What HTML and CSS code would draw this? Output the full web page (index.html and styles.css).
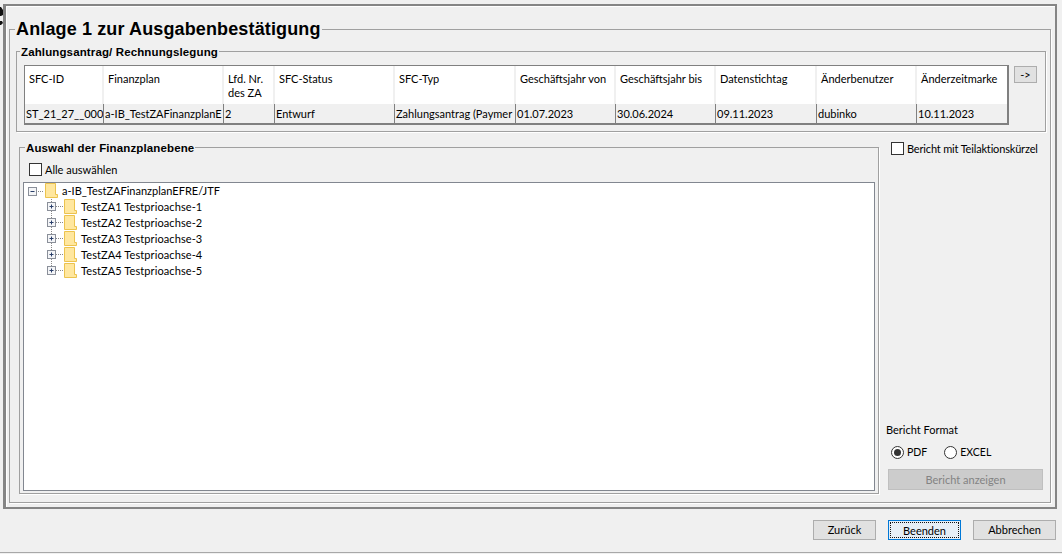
FILE: index.html
```html
<!DOCTYPE html>
<html lang="de">
<head>
<meta charset="utf-8">
<title>Anlage 1 zur Ausgabenbestätigung</title>
<link rel="stylesheet" href="styles.css">
</head>
<body>
<svg class="cursor-bit" width="6" height="20" viewBox="0 0 6 20"><path d="M0 0H1L3 3V8L1 9H0ZM0 14H2L3 16L1 18H0Z" fill="#111"/></svg>
<div class="app">
  <div class="frame">
    <fieldset class="fs main">
      <legend class="title">Anlage 1 zur Ausgabenbestätigung</legend>
      <fieldset class="fs pay">
        <legend class="sub">Zahlungsantrag/ Rechnungslegung</legend>
        <div class="pay-row">
          <table class="grid">
            <colgroup>
              <col class="c79"><col class="c120"><col class="c51"><col class="c120"><col class="c121"><col class="c100"><col class="c100"><col class="c101"><col class="c100"><col class="c90">
            </colgroup>
            <thead>
              <tr>
                <th>SFC-ID</th><th>Finanzplan</th><th>Lfd. Nr.<br>des ZA</th><th>SFC-Status</th><th>SFC-Typ</th><th>Geschäftsjahr von</th><th>Geschäftsjahr bis</th><th>Datenstichtag</th><th>Änderbenutzer</th><th>Änderzeitmarke</th>
              </tr>
            </thead>
            <tbody>
              <tr>
                <td>ST_21_27__000</td><td>a-IB_TestZAFinanzplanE</td><td>2</td><td>Entwurf</td><td>Zahlungsantrag (Paymer</td><td>01.07.2023</td><td>30.06.2024</td><td>09.11.2023</td><td>dubinko</td><td>10.11.2023</td>
              </tr>
            </tbody>
          </table>
          <button class="btn arrow" type="button">-&gt;</button>
        </div>
      </fieldset>
      <div class="middle">
        <fieldset class="fs select">
          <legend class="sub">Auswahl der Finanzplanebene</legend>
          <label class="check all"><span class="box"></span>Alle auswählen</label>
          <div class="tree">
            <div class="node">
              <svg class="tw-root" width="38" height="16" viewBox="0 0 38 16"><rect x="4.5" y="4.5" width="8" height="8" fill="#f4f5f7" stroke="#8a8f99"/><path d="M6.5 8.5h4" stroke="#2a3f6a"/><path d="M14 8.5h6" stroke="#888" stroke-dasharray="1 1"/><path class="folder" d="M21.5.5H31.5V11.5H33.5V14.5H21.5Z"/></svg>
              <span>a-IB_TestZAFinanzplanEFRE/JTF</span>
            </div>
            <div class="node child">
              <svg width="57" height="16" viewBox="0 0 57 16"><path d="M27.5 0V3M27.5 12V16" stroke="#888" stroke-dasharray="1 1"/><rect x="23.5" y="3.5" width="8" height="8" fill="#f4f5f7" stroke="#8a8f99"/><path d="M25.5 7.5h4M27.5 5.5v4" stroke="#2a3f6a"/><path d="M32 7.5h7" stroke="#888" stroke-dasharray="1 1"/><path class="folder" d="M40.5.5H50.5V11.5H52.5V14.5H40.5Z"/></svg>
              <span>TestZA1 Testprioachse-1</span>
            </div>
            <div class="node child">
              <svg width="57" height="16" viewBox="0 0 57 16"><path d="M27.5 0V3M27.5 12V16" stroke="#888" stroke-dasharray="1 1"/><rect x="23.5" y="3.5" width="8" height="8" fill="#f4f5f7" stroke="#8a8f99"/><path d="M25.5 7.5h4M27.5 5.5v4" stroke="#2a3f6a"/><path d="M32 7.5h7" stroke="#888" stroke-dasharray="1 1"/><path class="folder" d="M40.5.5H50.5V11.5H52.5V14.5H40.5Z"/></svg>
              <span>TestZA2 Testprioachse-2</span>
            </div>
            <div class="node child">
              <svg width="57" height="16" viewBox="0 0 57 16"><path d="M27.5 0V3M27.5 12V16" stroke="#888" stroke-dasharray="1 1"/><rect x="23.5" y="3.5" width="8" height="8" fill="#f4f5f7" stroke="#8a8f99"/><path d="M25.5 7.5h4M27.5 5.5v4" stroke="#2a3f6a"/><path d="M32 7.5h7" stroke="#888" stroke-dasharray="1 1"/><path class="folder" d="M40.5.5H50.5V11.5H52.5V14.5H40.5Z"/></svg>
              <span>TestZA3 Testprioachse-3</span>
            </div>
            <div class="node child">
              <svg width="57" height="16" viewBox="0 0 57 16"><path d="M27.5 0V3M27.5 12V16" stroke="#888" stroke-dasharray="1 1"/><rect x="23.5" y="3.5" width="8" height="8" fill="#f4f5f7" stroke="#8a8f99"/><path d="M25.5 7.5h4M27.5 5.5v4" stroke="#2a3f6a"/><path d="M32 7.5h7" stroke="#888" stroke-dasharray="1 1"/><path class="folder" d="M40.5.5H50.5V11.5H52.5V14.5H40.5Z"/></svg>
              <span>TestZA4 Testprioachse-4</span>
            </div>
            <div class="node child">
              <svg width="57" height="16" viewBox="0 0 57 16"><path d="M27.5 0V3" stroke="#888" stroke-dasharray="1 1"/><rect x="23.5" y="3.5" width="8" height="8" fill="#f4f5f7" stroke="#8a8f99"/><path d="M25.5 7.5h4M27.5 5.5v4" stroke="#2a3f6a"/><path d="M32 7.5h7" stroke="#888" stroke-dasharray="1 1"/><path class="folder" d="M40.5.5H50.5V11.5H52.5V14.5H40.5Z"/></svg>
              <span>TestZA5 Testprioachse-5</span>
            </div>
          </div>
        </fieldset>
        <div class="side">
          <label class="check part"><span class="box"></span>Bericht mit Teilaktionskürzel</label>
          <div class="format">
            <div class="format-label">Bericht Format</div>
            <div class="radios">
              <label class="radio"><span class="dot on"></span>PDF</label>
              <label class="radio"><span class="dot"></span>EXCEL</label>
            </div>
            <button class="btn show" type="button">Bericht anzeigen</button>
          </div>
        </div>
      </fieldset>
    </fieldset>
  </div>
  <div class="footer">
    <button class="btn foot back" type="button">Zurück</button>
    <button class="btn foot end" type="button"><span class="focus">Beenden</span></button>
    <button class="btn foot cancel" type="button">Abbrechen</button>
  </div>
</div>
</body>
</html>
```
FILE: styles.css
```css
* { box-sizing: border-box; }
html, body { margin: 0; height: 100%; }
body {
  background: #f0f0f0;
  color: #000;
  font: 11px/14px Lato, "Noto Sans", sans-serif;
  overflow: hidden;
}
.cursor-bit { position: absolute; left: 0; top: 7px; }
.app { width: 1062px; height: 554px; display: flex; flex-direction: column; }
.frame {
  margin: 4px 5px 0 3px;
  height: 505px;
  padding: 12px 4px 0 3px;
  border-style: solid;
  border-color: #858585;
  border-width: 2px 2px 2px 3px;
  box-shadow: inset 1px 1px 0 #fff, inset 0 0 0 2px #f0f0f0;
}
.fs {
  margin: 0;
  min-width: 0;
  border: 1px solid #a0a0a0;
  box-shadow: 1px 1px 0 #fff;
}
.main { height: 485px; padding: 4px 4px 8px 6px; display: flex; flex-direction: column; }
.title {
  margin-left: -1px;
  padding: 0 1px;
  height: 22px;
  font: bold 18px/22px "Liberation Sans", Arial, sans-serif;
  letter-spacing: .13px;
  color: #000;
}
.sub {
  padding: 2px 1px 0;
  height: 14px;
  font: bold 11.5px/13px "Liberation Sans", Arial, sans-serif;
  letter-spacing: .13px;
  color: #000;
}
.pay .sub { margin-left: -4px; }
.select .sub { margin-left: 2px; }
.pay { padding: 7px 7px 6px; height: 88px; }
.pay-row { display: flex; align-items: flex-start; gap: 5px; }
.grid {
  table-layout: fixed;
  width: 985px;
  flex: none;
  border-collapse: separate;
  border-spacing: 0;
  border: solid #808080;
  border-width: 1px 2px 2px 1px;
  font-size: 11px;
}
.c79 { width: 79px; } .c120 { width: 120px; } .c51 { width: 51px; } .c121 { width: 121px; }
.c100 { width: 100px; } .c101 { width: 101px; } .c90 { width: 90px; }
.grid th {
  height: 38px;
  padding: 6px 2px 0 4px;
  background: #fff;
  border-right: 2px solid #f0f0f0;
  font-weight: normal;
  text-align: left;
  vertical-align: top;
  overflow: hidden;
  white-space: nowrap;
}
.grid th:last-child { border-right: 0; }
.grid td {
  height: 19px;
  padding: 0 0 0 1px;
  background: #f0f0f0;
  border-right: 1px solid #808080;
  white-space: nowrap;
  overflow: hidden;
}
.grid td:last-child { border-right: 0; }
.btn {
  margin: 0;
  padding: 0;
  font: inherit;
  color: #000;
  background: #e1e1e1;
  border: 1px solid #adadad;
}
.arrow { width: 23px; height: 17px; margin-top: 1px; line-height: 13px; flex: none; }
.middle { display: flex; gap: 7px; margin: 8px 3px 0; flex: 1; min-height: 0; }
.select { width: 860px; flex: none; padding: 9px 3px 2px 3px; display: flex; flex-direction: column; }
.check { display: flex; align-items: center; gap: 3px; white-space: nowrap; }
.box { width: 13px; height: 13px; border: 1px solid #333; background: #fff; flex: none; }
.all { margin-left: 6px; height: 13px; }
.tree {
  flex: 1;
  margin-top: 6px;
  background: #fff;
  border: 1px solid #828790;
}
.node { display: flex; align-items: center; height: 16px; }
.node svg { display: block; flex: none; }
.child span { letter-spacing: .09px; }
.folder { fill: #ffe79f; stroke: #ecc34e; }
.side { flex: 1; display: flex; flex-direction: column; padding: 2px 3px 4px 0; }
.part { margin-left: 5px; height: 13px; letter-spacing: -.17px; }
.format { margin-top: auto; }
.format-label { height: 14px; margin-bottom: 8px; }
.radios { display: flex; gap: 17px; margin-left: 5px; height: 14px; font-size: 10.5px; }
.radio { display: flex; align-items: center; gap: 3px; }
.dot {
  width: 13px; height: 13px; flex: none;
  border: 1px solid #333; border-radius: 50%;
  background: #fff;
  display: flex; align-items: center; justify-content: center;
}
.dot.on::after { content: ""; width: 7px; height: 7px; border-radius: 50%; background: #333; }
.show {
  display: block;
  width: 155px; height: 21px;
  margin: 10px 0 0 2px;
  background: #ccc;
  border-color: #bfbfbf;
  color: #838383;
}
.footer {
  height: 44px;
  display: flex;
  justify-content: flex-end;
  gap: 12px;
  padding: 11px 6px 0 0;
  border-bottom: 1px solid #a8a8a8;
}
.foot { height: 20px; }
.back { width: 63px; }
.end { width: 73px; border-color: #0078d7; background: #e5eef6; padding: 1px; }
.focus { display: block; height: 100%; line-height: 16px; border: 1px dotted #111; }
.cancel { width: 83px; }
```
